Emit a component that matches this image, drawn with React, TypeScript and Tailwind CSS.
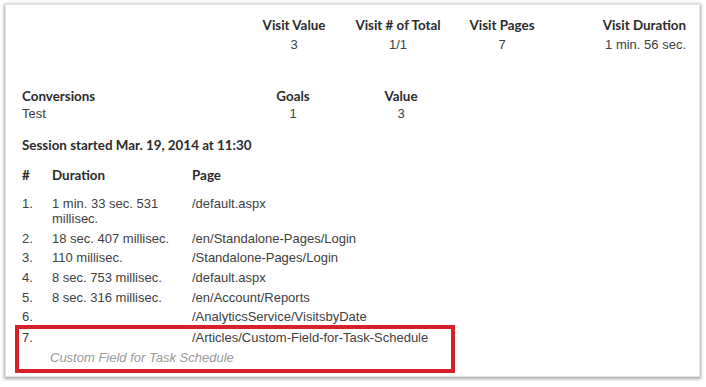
const stats = [
  { label: "Visit Value", value: "3" },
  { label: "Visit # of Total", value: "1/1" },
  { label: "Visit Pages", value: "7" },
];

const visits = [
  { n: "1.", duration: "1 min. 33 sec. 531 millisec.", page: "/default.aspx" },
  { n: "2.", duration: "18 sec. 407 millisec.", page: "/en/Standalone-Pages/Login" },
  { n: "3.", duration: "110 millisec.", page: "/Standalone-Pages/Login" },
  { n: "4.", duration: "8 sec. 753 millisec.", page: "/default.aspx" },
  { n: "5.", duration: "8 sec. 316 millisec.", page: "/en/Account/Reports" },
  { n: "6.", duration: "", page: "/AnalyticsService/VisitsbyDate" },
];

const head = "font-['Lato',sans-serif] font-bold text-[13.4px] text-[#2b2b2b]";
const body = "font-['Liberation_Sans',Arial,sans-serif] text-[13px] text-[#404040]";

function Row({ n, duration, page }: { n: string; duration: string; page: string }) {
  return (
    <div className={`flex leading-[15px] py-[2.3px] ${body}`}>
      <div className="w-[30px] shrink-0">{n}</div>
      <div className="w-[140px] shrink-0 pr-[22px]">{duration}</div>
      <div>{page}</div>
    </div>
  );
}

export default function App() {
  return (
    <div className="w-[706px] h-[387px] bg-white pt-[4px] pl-[5px]">
      <div className="w-[695px] h-[373px] bg-white border border-[#e4e4e4] shadow-[0_1px_3px_1px_rgba(0,0,0,0.35)] pl-[16px]">
        {/* visit summary */}
        <div className="flex pt-[11px] leading-[19px]">
          <div className="w-[220px]" />
          {stats.map((s) => (
            <div key={s.label} className="w-[104px] text-center">
              <div className={head}>{s.label}</div>
              <div className={body}>{s.value}</div>
            </div>
          ))}
          <div className="w-[132px] text-right">
            <div className={head}>Visit Duration</div>
            <div className={body}>1 min. 56 sec.</div>
          </div>
        </div>

        {/* conversions */}
        <div className="flex mt-[33px] leading-[18px]">
          <div className="w-[220px]">
            <div className={head}>Conversions</div>
            <div className={body}>Test</div>
          </div>
          <div className="w-[102px] text-center">
            <div className={head}>Goals</div>
            <div className={body}>1</div>
          </div>
          <div className="w-[114px] text-center">
            <div className={head}>Value</div>
            <div className={body}>3</div>
          </div>
        </div>

        <div className={`mt-[13px] leading-[19px] ${head}`}>Session started Mar. 19, 2014 at 11:30</div>

        <div className={`flex mt-[11px] leading-[19px] ${head}`}>
          <div className="w-[30px]">#</div>
          <div className="w-[140px]">Duration</div>
          <div>Page</div>
        </div>

        <div className="mt-[9px]">
          {visits.map((v) => (
            <Row key={v.n} {...v} />
          ))}
          <div className="w-[440px] -ml-[7px] -mt-[2px] border-4 border-[#d8202b] pl-[3px] pt-[1px] pb-[4px]">
            <div className={`flex leading-[15px] ${body}`}>
              <div className="w-[170px] shrink-0">7.</div>
              <div>/Articles/Custom-Field-for-Task-Schedule</div>
            </div>
            <div className="mt-[5px] pl-[28px] leading-[15px] font-['Liberation_Sans',Arial,sans-serif] text-[13px] italic text-[#9a9a9a]">
              Custom Field for Task Schedule
            </div>
          </div>
        </div>
      </div>
    </div>
  );
}
